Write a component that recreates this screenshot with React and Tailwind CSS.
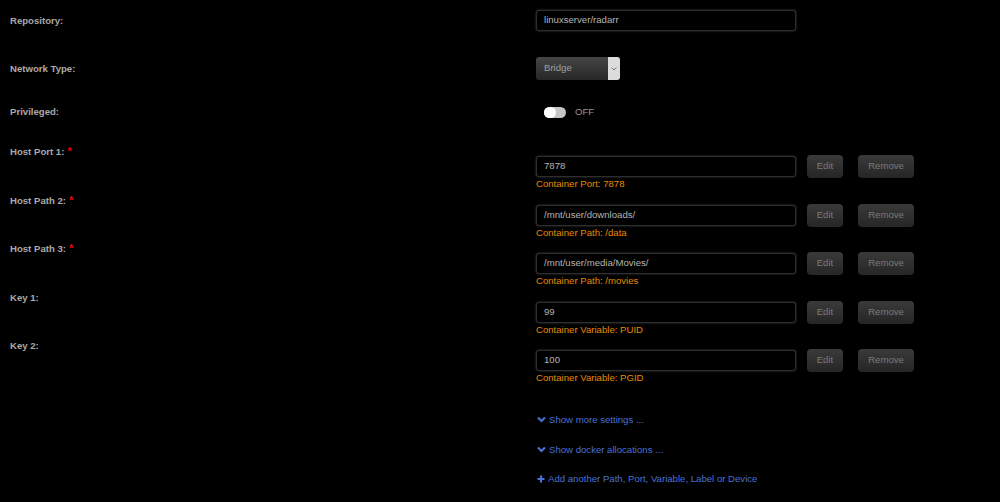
import React from 'react';

const FONT = { fontFamily: '"Liberation Sans", Arial, sans-serif' };

const ROWS = [
  { label: 'Host Port 1:', value: '7878', desc: 'Container Port: 7878' },
  { label: 'Host Path 2:', value: '/mnt/user/downloads/', desc: 'Container Path: /data' },
  { label: 'Host Path 3:', value: '/mnt/user/media/Movies/', desc: 'Container Path: /movies' },
  { label: 'Key 1:', value: '99', desc: 'Container Variable: PUID', optional: true },
  { label: 'Key 2:', value: '100', desc: 'Container Variable: PGID', optional: true },
];

function Chevron() {
  return (
    <svg width="9" height="7" viewBox="0 0 9 7" className="mr-[3px]">
      <path d="M1 1.5 L4.5 5 L8 1.5" fill="none" stroke="currentColor" strokeWidth="2.2" />
    </svg>
  );
}

function Plus() {
  return (
    <svg width="8" height="8" viewBox="0 0 8 8" className="mr-[3px]">
      <path d="M4 0.5 V7.5 M0.5 4 H7.5" fill="none" stroke="currentColor" strokeWidth="2.2" />
    </svg>
  );
}

function Label({ children, required }) {
  return (
    <div className="w-[536px] shrink-0 pl-[10px] text-[9.6px] leading-[12px] font-bold text-[#aaaaaa]">
      {children}
      {required && <span className="ml-[3px] text-[11px] leading-[0] text-[#ee0000]">*</span>}
    </div>
  );
}

function TextBox({ value }) {
  return (
    <div className="w-[260px] h-[21px] flex items-center pl-[7px] rounded-[3px] bg-black border border-[#2e2e2e] shadow-[0_0_2px_#4a4a4a] text-[9.6px] text-[#b4b4b4]">
      {value}
    </div>
  );
}

function Btn({ children, w }) {
  return (
    <div className={`${w} h-[23px] flex items-center justify-center rounded-[4px] bg-gradient-to-b from-[#3a3a3a] to-[#262626] text-[9.6px] text-[#7a7a7a]`}>
      {children}
    </div>
  );
}

export default function App() {
  return (
    <div className="w-[1000px] h-[502px] bg-black overflow-hidden pt-[10px]" style={FONT}>
      {/* repository */}
      <div className="flex items-center h-[21px]">
        <Label>Repository:</Label>
        <TextBox value="linuxserver/radarr" />
      </div>

      {/* network type */}
      <div className="flex items-center h-[23px] mt-[26px]">
        <Label>Network Type:</Label>
        <div className="w-[84px] h-[23px] flex rounded-[3px] overflow-hidden bg-gradient-to-b from-[#464646] to-[#272727]">
          <div className="flex-1 flex items-center pl-[8px] text-[9.6px] text-[#a0a0a0]">Bridge</div>
          <div className="w-[12px] bg-[#dcdcdc] flex items-center justify-center text-[#777]">
            <svg width="6" height="4" viewBox="0 0 6 4">
              <path d="M0.5 0.5 L3 3 L5.5 0.5" fill="none" stroke="currentColor" strokeWidth="1" />
            </svg>
          </div>
        </div>
      </div>

      {/* privileged */}
      <div className="flex items-center h-[14px] mt-[25px]">
        <Label>Privileged:</Label>
        <div className="pl-[8px] flex items-center">
          <div className="w-[22px] h-[11px] rounded-full bg-[#c6c6c6] relative">
            <div className="absolute left-0 top-0 w-[12px] h-[11px] rounded-full bg-white" />
          </div>
          <span className="ml-[9px] text-[9.6px] text-[#9a9a9a]">OFF</span>
        </div>
      </div>

      {/* config rows */}
      <div className="mt-[27px]">
        {ROWS.map((r) => (
          <div key={r.label} className="flex h-[48.5px]">
            <Label required={!r.optional}>{r.label}</Label>
            <div className="pt-[9px]">
              <div className="flex items-center h-[23px]">
                <TextBox value={r.value} />
                <div className="ml-[11px]"><Btn w="w-[36px]">Edit</Btn></div>
                <div className="ml-[15px]"><Btn w="w-[56px]">Remove</Btn></div>
              </div>
              <div className="text-[9.6px] leading-[13px] text-[#e58a00] -mt-[1px]">{r.desc}</div>
            </div>
          </div>
        ))}
      </div>

      {/* links */}
      <div className="pl-[537px] text-[9.6px] leading-[12px] text-[#4a70d4]">
        <div className="flex items-center mt-[25px]"><Chevron />Show more settings ...</div>
        <div className="flex items-center mt-[18px]"><Chevron />Show docker allocations ...</div>
        <div className="flex items-center mt-[17px]"><Plus />Add another Path, Port, Variable, Label or Device</div>
      </div>
    </div>
  );
}
